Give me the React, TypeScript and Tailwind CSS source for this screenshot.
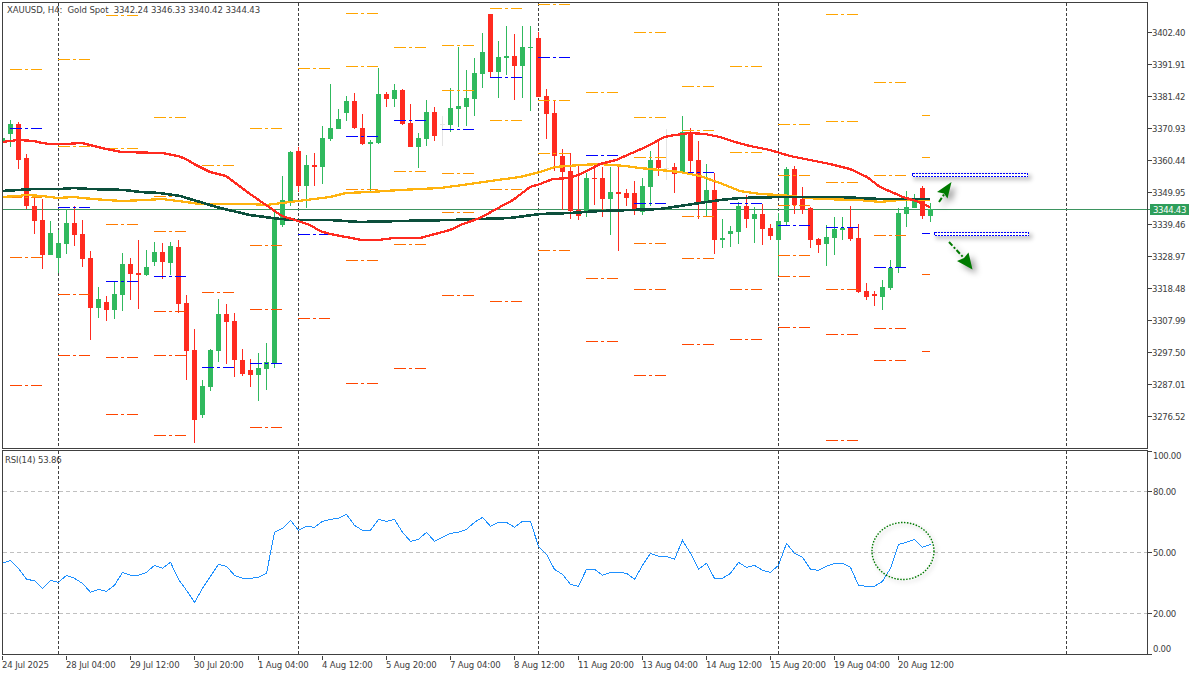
import React from "react";

type Candle = [number, number, number, number, "g" | "r" | "d"];

// body top, body bottom, wick top, wick bottom, direction (page pixels)
const CANDLES: Candle[] = [
  [138, 141, 138, 141, "g"], [124, 134, 120, 147, "g"], [124, 160, 122, 169, "r"], [158, 206, 154, 209, "r"],
  [206, 221, 198, 234, "r"], [220, 255, 199, 269, "r"], [233, 255, 221, 255, "g"], [243, 258, 230, 273, "g"],
  [223, 244, 209, 254, "g"], [223, 235, 206, 246, "r"], [234, 259, 220, 267, "r"], [258, 308, 251, 340, "r"],
  [299, 308, 287, 318, "g"], [302, 310, 296, 321, "r"], [294, 310, 281, 319, "g"], [264, 295, 253, 311, "g"],
  [264, 274, 258, 300, "r"], [273, 275, 240, 309, "r"], [267, 275, 250, 276, "g"], [252, 262, 242, 266, "g"],
  [252, 262, 243, 279, "r"], [246, 263, 242, 275, "g"], [247, 304, 240, 313, "r"], [303, 351, 295, 380, "r"],
  [350, 420, 329, 443, "r"], [386, 415, 380, 418, "g"], [350, 387, 349, 391, "g"], [314, 351, 299, 362, "g"],
  [314, 322, 304, 364, "r"], [321, 360, 313, 377, "r"], [360, 374, 349, 376, "r"], [370, 375, 359, 387, "r"],
  [368, 375, 353, 401, "g"], [362, 369, 343, 390, "g"], [219, 363, 209, 368, "g"], [200, 225, 176, 227, "g"],
  [152, 201, 151, 206, "g"], [151, 186, 147, 192, "r"], [165, 186, 155, 208, "g"], [165, 167, 153, 186, "r"],
  [138, 167, 126, 184, "g"], [128, 139, 84, 141, "g"], [119, 129, 109, 129, "g"], [101, 113, 96, 121, "g"],
  [101, 128, 93, 129, "r"], [128, 144, 114, 145, "r"], [142, 144, 140, 192, "g"], [94, 143, 68, 144, "g"],
  [94, 99, 92, 107, "r"], [90, 99, 84, 107, "g"], [90, 124, 89, 125, "r"], [123, 147, 104, 147, "r"],
  [138, 147, 133, 168, "g"], [112, 139, 100, 146, "g"], [112, 136, 107, 141, "r"], [124, 125, 116, 146, "d"],
  [108, 125, 88, 132, "g"], [106, 109, 47, 127, "g"], [98, 107, 70, 126, "g"], [73, 99, 58, 116, "g"],
  [52, 74, 33, 88, "g"], [14, 72, 14, 78, "r"], [57, 72, 41, 98, "g"], [56, 58, 26, 75, "g"],
  [56, 66, 34, 100, "r"], [47, 66, 26, 98, "g"], [47, 48, 26, 111, "g"], [38, 97, 32, 97, "r"],
  [96, 114, 89, 139, "r"], [113, 156, 100, 171, "r"], [156, 172, 149, 210, "r"], [171, 211, 153, 219, "r"],
  [210, 216, 165, 220, "r"], [178, 211, 173, 217, "g"], [178, 179, 165, 205, "r"], [178, 199, 167, 217, "r"],
  [192, 199, 167, 235, "g"], [192, 194, 166, 251, "r"], [193, 198, 189, 206, "r"], [193, 210, 181, 215, "r"],
  [186, 212, 178, 215, "g"], [160, 187, 151, 206, "g"], [160, 168, 140, 176, "r"], [168, 169, 129, 180, "d"],
  [167, 174, 163, 193, "r"], [132, 172, 116, 174, "g"], [132, 161, 128, 173, "r"], [160, 203, 141, 219, "r"],
  [190, 202, 164, 217, "g"], [190, 240, 173, 254, "r"], [238, 240, 219, 248, "g"], [231, 234, 226, 247, "g"],
  [206, 232, 202, 244, "g"], [206, 219, 195, 228, "r"], [214, 219, 207, 243, "g"], [214, 229, 204, 245, "r"],
  [228, 236, 224, 240, "r"], [221, 240, 213, 275, "g"], [169, 222, 167, 225, "g"], [169, 205, 166, 214, "r"],
  [199, 210, 187, 214, "r"], [208, 240, 207, 248, "r"], [239, 245, 238, 253, "r"], [237, 244, 225, 266, "g"],
  [229, 238, 217, 255, "g"], [228, 230, 217, 240, "g"], [228, 239, 206, 241, "r"], [238, 292, 224, 293, "r"],
  [291, 297, 283, 300, "r"], [294, 296, 291, 306, "r"], [287, 297, 280, 310, "g"], [268, 288, 260, 290, "g"],
  [213, 268, 208, 273, "g"], [207, 214, 191, 227, "g"], [200, 208, 194, 208, "g"], [188, 216, 186, 219, "r"],
  [209, 216, 203, 222, "g"],
];

// levels per session: [start x, [orange levels], blue pivot]
const LEVELS: [number, number[], number][] = [
  [10, [69, 197, 257, 385], 128],
  [58, [59, 146, 294, 355], 207],
  [106, [15, 148, 224, 357, 414], 281],
  [154, [117, 196, 231, 311, 355, 435], 276],
  [202, [165, 292], 367],
  [250, [128, 245, 309, 427], 363],
  [298, [68, 318], 234],
  [346, [13, 66, 189, 260, 383], 136],
  [394, [47, 171, 244, 368], 120],
  [442, [45, 90, 173, 212, 295], 129],
  [490, [8, 120, 189, 301], 77],
  [538, [4, 100, 153, 250], 57],
  [586, [92, 278, 341], 155],
  [634, [32, 117, 157, 243, 289, 375], 203],
  [682, [86, 130, 216, 258, 344], 172],
  [730, [66, 152, 289, 339], 203],
  [778, [124, 175, 205, 255, 276, 327], 225],
  [826, [14, 121, 182, 289, 334, 440], 227],
  [874, [82, 175, 235, 328, 360], 267],
  [922, [115, 157, 198, 274, 351], 233],
];

const RED =
  "2,142 10,141 18,140 34,141 42,143 50,144 66,144 82,143 90,145 106,149 122,152 162,153 178,156 186,159 194,164 210,172 226,176 234,182 250,194 266,205 282,216 298,221 310,225 320,231 330,234 346,237 362,240 378,240 394,238 420,238 435,234 450,230 463,224 480,218 500,207 513,200 530,187 540,184 553,179 570,178 583,173 600,164 616,160 632,153 648,146 664,137 675,135 690,133 705,134 720,137 735,142 750,146 770,150 790,156 810,160 830,164 850,169 867,177 880,187 903,197 916,201 930,207";
const YELLOW =
  "2,197 18,196 26,195 42,196 58,198 74,197 82,198 106,200 122,201 146,200 162,199 186,202 200,204 250,204 266,205 282,203 298,201 330,197 346,193 370,192 400,190 440,188 470,184 490,181 520,177 540,172 555,167 580,165 600,164 625,166 640,168 660,170 680,172 700,176 720,183 740,191 760,194 780,195 800,197 820,199 860,200 880,202 900,200 930,200";
const DARK =
  "2,191 18,190 34,189 60,189 74,188 90,189 125,190 140,192 160,193 180,196 200,202 220,208 250,215 280,219 298,220 330,220 360,222 400,221 450,220 480,219 510,218 540,214 570,213 600,211 660,209 680,206 700,203 720,200 740,198 780,197 800,197 840,197 880,199 900,199 930,199";

// RSI values read at each candle, zoomed page y
const RSI_Y = [
  355, 346, 370, 403, 407, 430, 406, 412, 391, 400, 415, 442, 433, 439, 421, 382, 391, 391, 382, 361, 370, 352, 403, 436, 472, 430, 394, 358, 364, 391, 400, 400, 397, 385, 262, 250, 226, 256, 244, 247, 229, 223, 220, 208, 241, 256, 256, 223, 229, 223,
  262, 289, 283, 262, 289, 277, 265, 262, 253, 232, 217, 244, 232, 232, 247, 229, 229, 304, 328, 373, 388, 418, 424, 373, 373, 391, 382, 382, 385, 403, 361, 325, 334, 334, 343, 286, 325, 373, 355, 400, 400, 385, 352, 367, 361, 376, 382, 361, 295, 325,
  337, 373, 376, 364, 355, 355, 367, 421, 424, 424, 409, 370, 298, 292, 283, 307, 298,
];
const RSI_POINTS = RSI_Y.map((y, k) => `${2.5 + 8 * k},${445 + y / 3}`).join(" ");

const PRICES = ["3402.40", "3391.91", "3381.42", "3370.93", "3360.44", "3349.95", "3339.46", "3328.97", "3318.48", "3307.99", "3297.50", "3287.01", "3276.52"];
const TIMES = ["24 Jul 2025", "28 Jul 04:00", "29 Jul 12:00", "30 Jul 20:00", "1 Aug 04:00", "4 Aug 12:00", "5 Aug 20:00", "7 Aug 04:00", "8 Aug 12:00", "11 Aug 20:00", "13 Aug 04:00", "14 Aug 12:00", "15 Aug 20:00", "19 Aug 04:00", "20 Aug 12:00"];
const VLINES = [58, 298, 538, 778, 1066];

const levelColor = (y: number) => {
  const t = Math.max(0, Math.min(1, (y - 150) / 170));
  return `rgb(255,${Math.round(165 - 96 * t)},0)`;
};

const candleColor = { g: "#30b95e", r: "#ff2b20", d: "#e4e4e4" };

const VGrid = ({ top, bottom }: { top: number; bottom: number }) => (
  <>
    {VLINES.map((x) => (
      <line key={x} x1={x + 0.5} x2={x + 0.5} y1={top} y2={bottom} stroke="#404040" strokeDasharray="3 2" />
    ))}
  </>
);

const PriceChart = () => (
  <svg width={1144} height={445} viewBox="3 3 1144 445" className="block" shapeRendering="crispEdges">
    <VGrid top={3} bottom={448} />
    <line x1={3} x2={1147} y1={209.5} y2={209.5} stroke="#3d9460" />
    {CANDLES.map(([top, bottom, wt, wb, dir], k) => (
      <g key={k} fill={candleColor[dir]}>
        <rect x={2 + 8 * k} y={wt} width={1} height={wb - wt} />
        {dir === "d" ? (
          <rect x={8 * k} y={top} width={5} height={1} />
        ) : (
          <rect x={8 * k} y={top} width={5} height={bottom - top} />
        )}
      </g>
    ))}
    {LEVELS.map(([x, ys, pivot]) => {
      const w = x === 922 ? 8 : 32;
      return (
        <g key={x} strokeDasharray="12 3 3 3 11">
          {ys.map((y) => (
            <line key={y} x1={x} x2={x + w} y1={y + 0.5} y2={y + 0.5} stroke={levelColor(y)} />
          ))}
          <line x1={x} x2={x + w} y1={pivot + 0.5} y2={pivot + 0.5} stroke="#0000ff" />
        </g>
      );
    })}
    <polyline points={YELLOW} fill="none" stroke="#ffb30f" strokeWidth={2.3} />
    <polyline points={DARK} fill="none" stroke="#0c4f3c" strokeWidth={2.6} />
    <polyline points={RED} fill="none" stroke="#ff2b20" strokeWidth={2.3} />

    {/* drawn boxes: soft shadow first, crisp dotted outline above it */}
    <g className="blur-[2px]" fill="none" stroke="#000000" strokeOpacity={0.3} strokeWidth={2}>
      <rect x={915} y={176} width={115} height={3} />
      <rect x={937} y={235} width={94} height={3} />
    </g>
    <g fill="#ffffff" stroke="#0000ff" strokeDasharray="2 1">
      <rect x={912.5} y={173.5} width={115} height={3} />
      <rect x={934.5} y={232.5} width={94} height={3} />
    </g>
    <g className="drop-shadow-[4px_4px_3px_rgba(0,0,0,0.4)]" shapeRendering="auto">
      <line x1={939} y1={202} x2={945} y2={193} stroke="#007a00" strokeWidth={2} strokeDasharray="5 2 2 2" />
      <polygon points="951.5,182 937,192 944,193.5 947.5,198.5" fill="#007a00" />
      <line x1={949} y1={242} x2={963} y2={257} stroke="#007a00" strokeWidth={2} strokeDasharray="5 2 2 2" />
      <polygon points="972.5,269.5 957,261 964,258 968.5,252.5" fill="#007a00" />
    </g>
  </svg>
);

const RsiChart = () => (
  <svg width={1144} height={203} viewBox="3 451 1144 203" className="block">
    <g shapeRendering="crispEdges">
      <VGrid top={451} bottom={654} />
      {[491, 552, 613].map((y) => (
        <line key={y} x1={3} x2={1147} y1={y + 0.5} y2={y + 0.5} stroke="#c0c0c0" strokeDasharray="4 3" />
      ))}
    </g>
    <polyline points={RSI_POINTS} fill="none" stroke="#1e90ff" strokeWidth={1} shapeRendering="crispEdges" />
    <ellipse
      cx={903}
      cy={551}
      rx={31}
      ry={28.5}
      fill="none"
      stroke="#007a00"
      strokeWidth={1.4}
      strokeDasharray="1.5 1.5"
      className="drop-shadow-[2px_2px_2px_rgba(0,0,0,0.3)]"
    />
  </svg>
);

export default function App() {
  return (
    <div className="flex h-[675px] w-[1200px] flex-col overflow-hidden bg-white pt-[2px] pl-[2px] font-['DejaVu_Sans_Condensed','Liberation_Sans',sans-serif] text-[9.5px] leading-none tracking-[-0.15px] text-[#404040]">
      <div className="flex">
        <div className="relative h-[447px] w-[1146px] border border-[#404040]">
          <PriceChart />
          <span className="absolute top-[2px] left-[4px] whitespace-pre tracking-[-0.1px]">
            {"XAUUSD, H4:  Gold Spot  3342.24 3346.33 3340.42 3344.43"}
          </span>
        </div>
        <div className="relative flex flex-col gap-[19px] pt-[24px] tracking-[-0.3px]">
          {PRICES.map((p) => (
            <div key={p} className="flex h-[13px] items-center">
              <div className="h-px w-[4px] bg-[#404040]" />
              <span>{p}</span>
            </div>
          ))}
          <div className="absolute top-[202px] left-0 flex h-[11px] items-center">
            <div className="h-px w-[2px] bg-[#3d9460]" />
            <div className="flex h-[11px] w-[39px] items-center justify-center bg-[#2e9e5b] text-white">3344.43</div>
          </div>
        </div>
      </div>

      <div className="mt-px flex">
        <div className="relative h-[205px] w-[1146px] border border-[#404040]">
          <RsiChart />
          <span className="absolute top-[4px] left-[2px]">RSI(14) 53.86</span>
        </div>
        <div className="-mt-px flex flex-col tracking-[-0.3px]">
          <div className="flex h-[13px]">
            <div className="mt-[2px] h-px w-[4px] bg-[#404040]" />
            <span className="mt-[2px] ml-px">100.00</span>
          </div>
          <div className="mt-[23px] flex h-[13px] items-center">
            <div className="h-px w-[4px] bg-[#404040]" />
            <span className="ml-px">80.00</span>
          </div>
          <div className="mt-[48px] flex h-[13px] items-center">
            <div className="h-px w-[4px] bg-[#404040]" />
            <span className="ml-px">50.00</span>
          </div>
          <div className="mt-[48px] flex h-[13px] items-center">
            <div className="h-px w-[4px] bg-[#404040]" />
            <span className="ml-px">20.00</span>
          </div>
          <div className="mt-[23px] flex h-[13px]">
            <div className="mt-[11px] h-px w-[4px] bg-[#404040]" />
            <span className="mt-[1px] ml-px">0.00</span>
          </div>
        </div>
      </div>

      <div className="flex">
        {TIMES.map((t) => (
          <div key={t} className="flex w-[64px] flex-col">
            <div className="h-[4px] w-px bg-[#404040]" />
            <span className="whitespace-nowrap">{t}</span>
          </div>
        ))}
      </div>
    </div>
  );
}
